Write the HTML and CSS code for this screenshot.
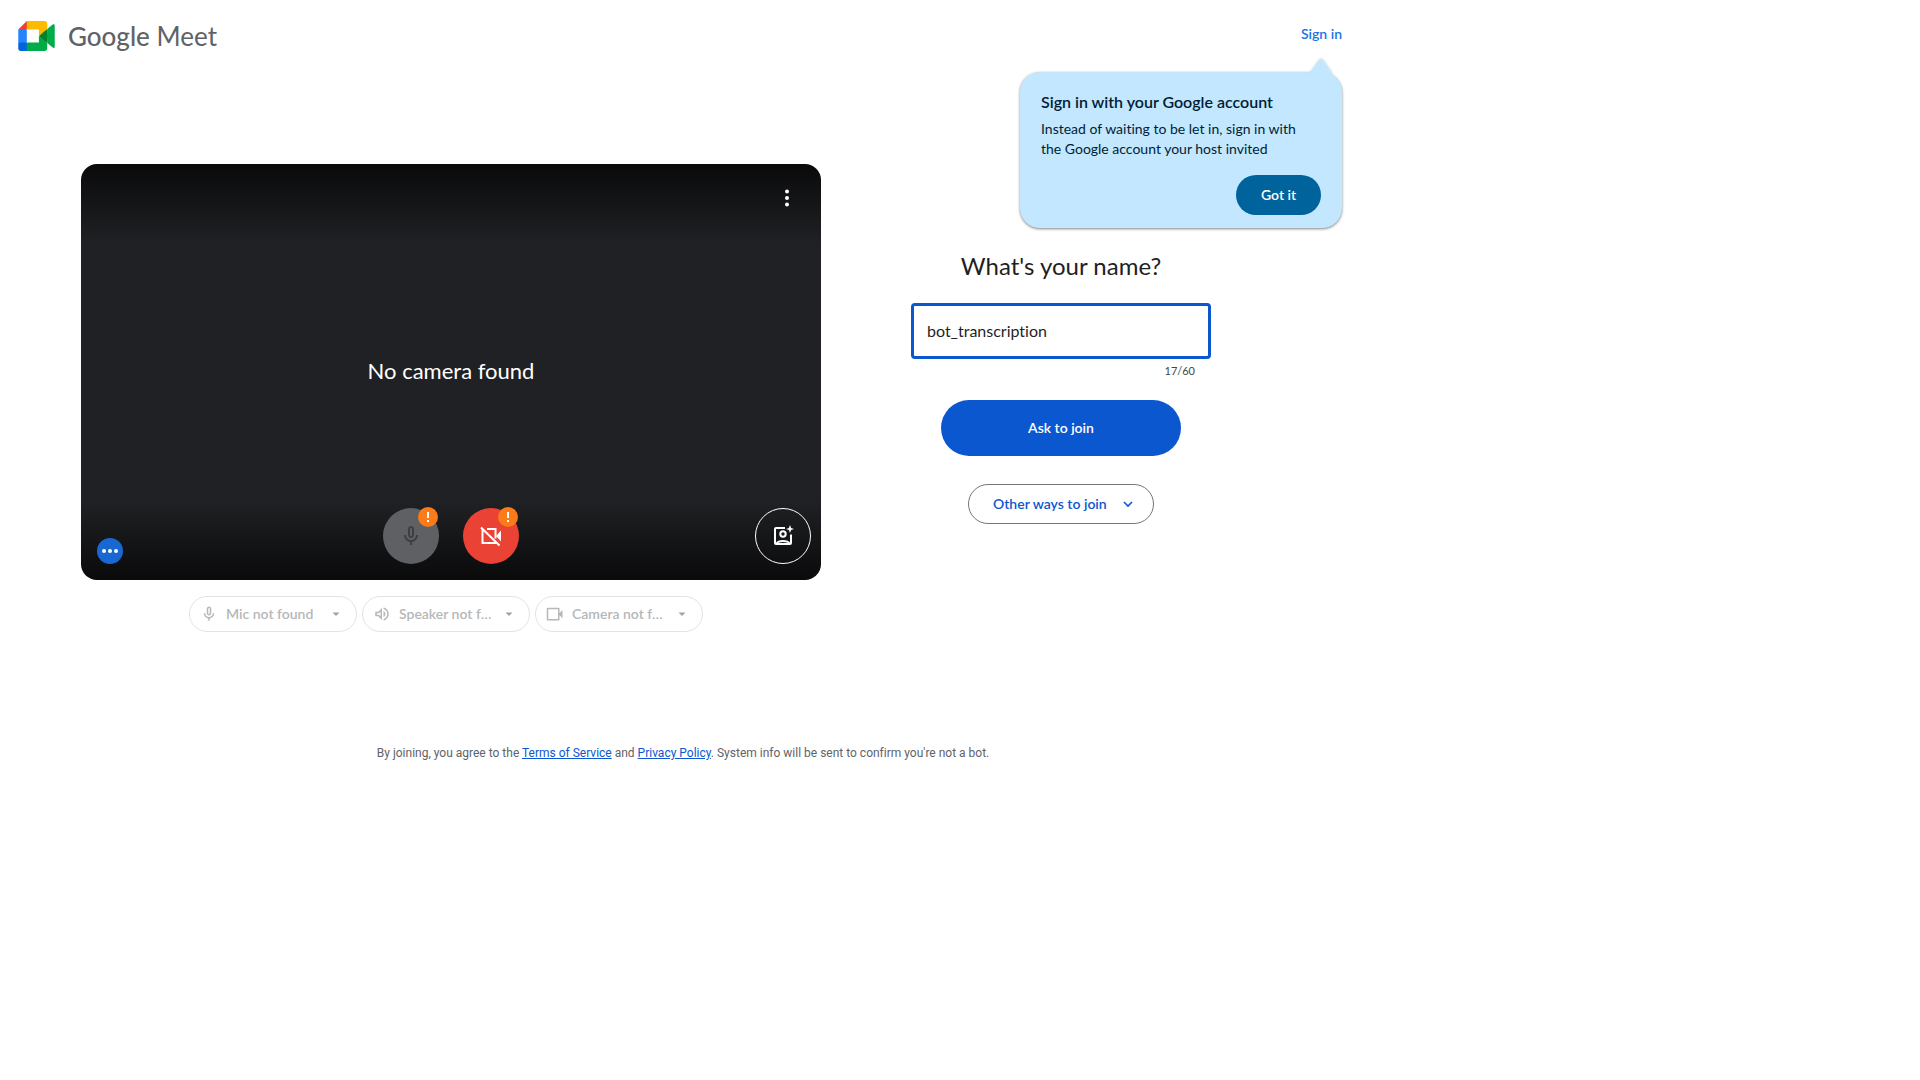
FILE: index.html
```html
<!DOCTYPE html>
<html lang="en">
<head>
<meta charset="utf-8">
<meta name="viewport" content="width=device-width, initial-scale=1">
<title>Google Meet</title>
<link rel="stylesheet" href="styles.css">
</head>
<body>
<div class="page">
  <header class="header">
    <div class="brand">
      <svg class="brand-mark" viewBox="0 0 87.5 72" aria-hidden="true">
        <path fill="#00832d" d="M49.5 36l8.53 9.75 11.47 7.33 2-17.02-2-16.64-11.69 6.44z"/>
        <path fill="#0066da" d="M0 51.5V66c0 3.315 2.685 6 6 6h14.5l3-10.96-3-9.54-9.95-3z"/>
        <path fill="#e94235" d="M20.5 0L0 20.5l10.55 3 9.95-3 2.95-9.41z"/>
        <path fill="#2684fc" d="M20.5 20.5H0v31h20.5z"/>
        <path fill="#00ac47" d="M82.6 8.68L69.5 19.42v33.66l13.16 10.79c1.97 1.54 4.85.135 4.85-2.37V11c0-2.535-2.945-3.925-4.91-2.32zM49.5 36v15.5h-29V72h43c3.315 0 6-2.685 6-6V53.08z"/>
        <path fill="#ffba00" d="M63.5 0h-43v20.5h29V36l20-16.57V6c0-3.315-2.685-6-6-6z"/>
      </svg>
      <span class="brand-name"><span class="brand-strong">Google</span> Meet</span>
    </div>
    <a class="sign-in" href="#">Sign in</a>
    <section class="callout" role="dialog" aria-labelledby="callout-title">
      <svg class="callout-arrow" viewBox="0 0 24 16" aria-hidden="true"><path d="M0 16L9 3Q12 -1 15 3L24 16Z"/></svg>
      <h2 class="callout-title" id="callout-title">Sign in with your Google account</h2>
      <p class="callout-text">Instead of waiting to be let in, sign in with the Google account your host invited</p>
      <button class="callout-button" type="button">Got it</button>
    </section>
  </header>

  <main class="main">
    <section class="preview" aria-label="Camera preview">
      <div class="video">
        <button class="more" type="button" aria-label="More options">
          <svg class="icon" viewBox="0 0 24 24"><circle cx="12" cy="5.5" r="2"/><circle cx="12" cy="12" r="2"/><circle cx="12" cy="18.5" r="2"/></svg>
        </button>
        <p class="video-message">No camera found</p>
        <div class="controls">
          <button class="activity" type="button" aria-label="Audio activity">
            <svg class="activity-dots" viewBox="0 0 26 26"><circle cx="7" cy="13" r="2"/><circle cx="13" cy="13" r="2"/><circle cx="19" cy="13" r="2"/></svg>
          </button>
          <div class="toggles">
            <button class="round mic" type="button" aria-label="Microphone problem">
              <svg class="icon" viewBox="0 0 24 24"><path d="M12 14c1.66 0 3-1.34 3-3V5c0-1.66-1.34-3-3-3S9 3.34 9 5v6c0 1.66 1.34 3 3 3zm-1-9c0-.55.45-1 1-1s1 .45 1 1v6c0 .55-.45 1-1 1s-1-.45-1-1V5zm6 6c0 2.76-2.24 5-5 5s-5-2.24-5-5H5c0 3.53 2.61 6.43 6 6.92V21h2v-3.08c3.39-.49 6-3.39 6-6.92h-2z"/></svg>
              <svg class="badge" viewBox="0 0 20 20"><circle cx="10" cy="10" r="10"/><path d="M9 5h2v6H9zM9 13h2v2H9z"/></svg>
            </button>
            <button class="round camera" type="button" aria-label="Camera problem">
              <svg class="icon" viewBox="0 0 24 24"><path d="M17.500 11.500l4.500-5v11l-4.500-5z"/><path class="line" d="M8 5h8.500v9.500M3.500 5.500V19H17M2 3.500L20.500 21.500"/></svg>
              <svg class="badge" viewBox="0 0 20 20"><circle cx="10" cy="10" r="10"/><path d="M9 5h2v6H9zM9 13h2v2H9z"/></svg>
            </button>
          </div>
          <button class="round effects" type="button" aria-label="Apply visual effects">
            <svg class="icon" viewBox="0 0 24 24"><path class="line" d="M14 4H5a1 1 0 0 0-1 1v14a1 1 0 0 0 1 1h14a1 1 0 0 0 1-1v-8.500M5.500 19.500c2-3.300 11-3.300 13 0"/><circle class="line" cx="12" cy="10" r="2.700"/><path d="M19 1l1.100 2.900L23 5l-2.900 1.100L19 9l-1.100-2.900L15 5l2.900-1.100z"/></svg>
          </button>
        </div>
      </div>
      <div class="devices">
        <label class="device">
          <svg class="device-icon" viewBox="0 0 24 24"><path d="M12 14c1.660 0 3-1.340 3-3V5c0-1.660-1.340-3-3-3S9 3.340 9 5v6c0 1.660 1.340 3 3 3zm-1-9c0-.55.45-1 1-1s1 .45 1 1v6c0 .55-.45 1-1 1s-1-.45-1-1V5zm6 6c0 2.760-2.240 5-5 5s-5-2.240-5-5H5c0 3.530 2.610 6.430 6 6.920V21h2v-3.080c3.390-.49 6-3.390 6-6.920h-2z"/></svg>
          <select class="device-select" aria-label="Microphone" disabled><option>Mic not found</option></select>
          <svg class="caret" viewBox="0 0 16 16"><path d="M4.500 6.500h7L8 10z"/></svg>
        </label>
        <label class="device">
          <svg class="device-icon" viewBox="0 0 24 24"><path d="M3 9v6h4l5 5V4L7 9H3zm7-.17v6.340L7.830 13H5v-2h2.830L10 8.830zM16.500 12c0-1.770-1.020-3.290-2.500-4.030v8.050c1.480-.73 2.500-2.250 2.500-4.020zM14 3.230v2.060c2.890.86 5 3.540 5 6.710s-2.110 5.850-5 6.710v2.060c4.010-.91 7-4.490 7-8.770s-2.990-7.860-7-8.770z"/></svg>
          <select class="device-select" aria-label="Speaker" disabled><option>Speaker not found</option></select>
          <svg class="caret" viewBox="0 0 16 16"><path d="M4.500 6.500h7L8 10z"/></svg>
        </label>
        <label class="device">
          <svg class="device-icon" viewBox="0 0 24 24"><path d="M18 10.500V4.500a1 1 0 0 0-1-1H2a1 1 0 0 0-1 1v15a1 1 0 0 0 1 1h15a1 1 0 0 0 1-1v-6l4 4v-11zM16 18.500H3v-13h13z"/></svg>
          <select class="device-select" aria-label="Camera" disabled><option>Camera not found</option></select>
          <svg class="caret" viewBox="0 0 16 16"><path d="M4.500 6.500h7L8 10z"/></svg>
        </label>
      </div>
    </section>

    <form class="join">
      <label class="join-title" for="name">What's your name?</label>
      <input class="name" id="name" type="text" value="bot_transcription" maxlength="60" autocomplete="off">
      <span class="counter">17/60</span>
      <button class="ask" type="button">Ask to join</button>
      <button class="other" type="button" aria-haspopup="menu">Other ways to join
        <svg class="chevron" viewBox="0 0 16 16"><path d="M4 6l4 4 4-4"/></svg>
      </button>
    </form>
  </main>

  <footer class="footer">By joining, you agree to the <a class="link" href="#">Terms of Service</a> and <a class="link" href="#">Privacy Policy</a>. System info will be sent to confirm you're not a bot.</footer>
</div>
</body>
</html>
```
FILE: styles.css
```css
*, *::before, *::after { box-sizing: border-box; }

body {
  margin: 0;
  background: #fff;
  color: #1f1f1f;
  font-family: Lato, "Open Sans", sans-serif;
  font-size: 14px;
  line-height: 20px;
  font-variant-ligatures: none;
}

h2, p { margin: 0; }

button {
  margin: 0;
  padding: 0;
  border: 0;
  background: none;
  font: inherit;
  font-variant-ligatures: none;
  font-weight: 600;
  cursor: pointer;
}

svg { display: block; fill: currentColor; }

.page { max-width: 1366px; }

/* Header */
.header {
  position: relative;
  display: flex;
  justify-content: space-between;
  align-items: flex-start;
  height: 72px;
  padding: 20px 24px 0 18px;
}

.brand { display: flex; align-items: center; gap: 13px; height: 32px; }
.brand-mark { width: 37px; height: 30px; }
.brand-name { color: #5f6368; font-size: 26px; line-height: 32px; }
.brand-strong { font-weight: 500; }

.sign-in {
  padding-top: 4px;
  color: #1a73e8;
  font-weight: 600;
  text-decoration: none;
}

/* Sign-in callout, floats over the page under its link */
.callout {
  position: absolute;
  top: 72px;
  right: 24px;
  width: 322px;
  padding: 18px 21px 13px;
  border-radius: 20px;
  background: #c2e7ff;
  color: #001d35;
  box-shadow: 0 1px 3px rgba(60, 64, 67, .5), 0 1px 2px rgba(60, 64, 67, .2);
}
.callout-arrow {
  position: absolute;
  right: 9px;
  top: -14px;
  width: 24px;
  height: 16px;
  color: #c2e7ff;
  overflow: visible;
  filter: drop-shadow(0 -1px 1px rgba(60, 64, 67, .15));
}
.callout-title { margin-bottom: 5px; font-size: 16px; font-weight: 600; line-height: 24px; }
.callout-text { padding-right: 16px; }
.callout-button {
  display: block;
  width: 85px;
  height: 40px;
  margin: 16px 0 0 auto;
  border-radius: 20px;
  background: #00639b;
  color: #fff;
}

/* Main columns */
.main {
  display: flex;
  gap: 90px;
  padding: 92px 155px 0 81px;
}
.preview { flex: 1; min-width: 0; }

.video {
  display: grid;
  grid-template-rows: 1fr auto 1fr;
  aspect-ratio: 740 / 416;
  padding: 10px 10px 16px 16px;
  border-radius: 16px;
  background:
    linear-gradient(rgba(0, 0, 0, .7), rgba(0, 0, 0, 0)) top / 100% 80px no-repeat,
    linear-gradient(rgba(0, 0, 0, 0), rgba(0, 0, 0, .7)) bottom / 100% 80px no-repeat,
    #202124;
  color: #fff;
}
.icon { width: 24px; height: 24px; }
.line { fill: none; stroke: currentColor; stroke-width: 2; }

.more {
  display: grid;
  place-items: center;
  justify-self: end;
  width: 48px;
  height: 48px;
  color: #fff;
}
.video-message {
  padding: 4px 6px 0 0;
  font-size: 22px;
  line-height: 28px;
  text-align: center;
}

.controls {
  display: grid;
  grid-template-columns: 1fr auto 1fr;
  align-items: end;
  align-self: end;
}
.toggles { display: flex; gap: 24px; margin-right: 6px; }
.activity {
  width: 26px;
  height: 26px;
  border-radius: 50%;
  background: #1967d2;
  color: #fff;
}
.round {
  position: relative;
  display: grid;
  place-items: center;
  width: 56px;
  height: 56px;
  border-radius: 50%;
}
.mic { background: #5f6063; color: #3c4043; }
.camera { background: #ea4335; color: #fff; }
.effects { justify-self: end; border: 1px solid #fff; color: #fff; }
.badge {
  position: absolute;
  top: -1px;
  right: 1px;
  width: 20px;
  height: 20px;
}
.badge circle { fill: #fa7b17; }
.badge path { fill: #fff; }

/* Device pickers */
.devices {
  display: flex;
  justify-content: center;
  gap: 5px;
  margin-top: 16px;
  padding-right: 10px;
}
.device {
  display: flex;
  align-items: center;
  width: 168px;
  height: 36px;
  padding: 0 12px 0 10px;
  border: 1px solid #e3e3e3;
  border-radius: 18px;
  color: #b5b7b9;
}
.device-icon { flex: none; width: 18px; height: 18px; }
.device-select {
  flex: 1;
  min-width: 0;
  margin: 0 6px 0 0;
  padding: 0 0 0 8px;
  border: 0;
  appearance: none;
  background: none;
  color: inherit;
  font: inherit;
  font-weight: 600;
  opacity: 1;
  overflow: hidden;
  text-overflow: ellipsis;
  white-space: nowrap;
}
.caret { flex: none; width: 16px; height: 16px; color: #a0a2a4; }

/* Join form */
.join {
  display: flex;
  flex-direction: column;
  align-items: center;
  width: 300px;
  padding-top: 86px;
}
.join-title { font-size: 24px; line-height: 32px; }
.name {
  width: 100%;
  height: 56px;
  margin-top: 21px;
  padding: 0 13px 2px;
  border: 3px solid #0b57d0;
  border-radius: 4px;
  outline: 0;
  background: #fff;
  color: #1f1f1f;
  font: inherit;
  font-variant-ligatures: none;
  font-size: 16px;
}
.counter {
  align-self: flex-end;
  margin: 4px 16px 0 0;
  color: #444746;
  font-size: 11px;
  line-height: 16px;
}
.ask {
  width: 240px;
  height: 56px;
  margin-top: 21px;
  border-radius: 28px;
  background: #0b57d0;
  color: #fff;
}
.other {
  display: flex;
  align-items: center;
  justify-content: space-between;
  width: 186px;
  height: 40px;
  margin-top: 28px;
  padding: 0 17px 0 24px;
  border: 1px solid #747775;
  border-radius: 20px;
  color: #0b57d0;
}
.chevron { width: 16px; height: 16px; fill: none; stroke: currentColor; stroke-width: 1.6; }

.footer {
  margin-top: 113px;
  color: #5f6368;
  font-family: Roboto, sans-serif;
  font-size: 12px;
  line-height: 16px;
  text-align: center;
}
.link { color: #0b57d0; text-decoration: underline; }
```
